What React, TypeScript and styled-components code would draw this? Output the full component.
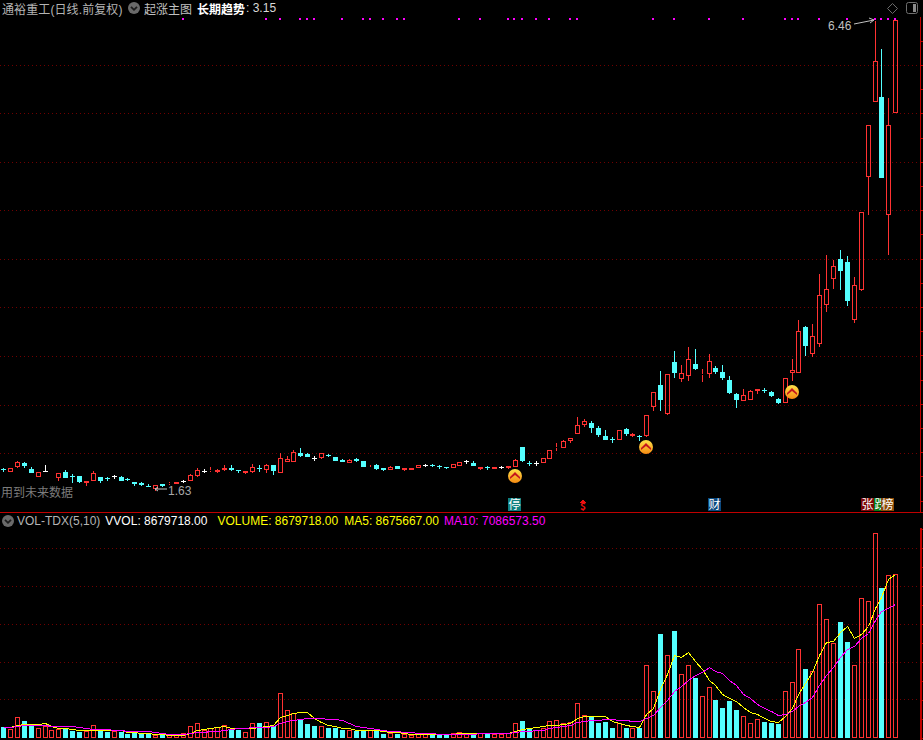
import React from 'react';
import styled, { createGlobalStyle } from 'styled-components';

const GlobalStyle = createGlobalStyle`
  html, body {
    margin: 0;
    padding: 0;
    background: #000;
  }
`;

const RED = '#ff3232';
const CYAN = '#54ffff';
const GRID = '#700000';
const AXIS = '#c00000';

const Page = styled.div`
  width: 923px;
  height: 740px;
  background: #000;
  overflow: hidden;
  display: flex;
  flex-direction: column;
  font-family: "Liberation Sans", "Noto Sans CJK SC", sans-serif;
`;

const MainHeader = styled.div`
  height: 17px;
  display: flex;
  align-items: center;
  padding: 0 5px 1px 2px;
  box-sizing: border-box;
  font-size: 12px;
  white-space: nowrap;
`;

const StockName = styled.span`
  color: #b4b4b4;
  width: 120px;
  margin-right: 6px;
  letter-spacing: 0.1px;
`;

const PlainLabel = styled.span`
  color: #c0c0c0;
  margin: 0 5px 0 4px;
`;

const TrendName = styled.span`
  color: #fff;
  font-weight: 700;
`;

const TrendValue = styled.span`
  color: #d8d8d8;
  margin-left: 1px;
`;

const HeaderTools = styled.div`
  margin-left: auto;
  display: flex;
  align-items: center;
  gap: 8px;
`;

const Chart = styled.svg`
  display: block;
  flex: none;
`;

const LowerHeader = styled.div`
  height: 15px;
  border-top: 1px solid ${AXIS};
  display: flex;
  align-items: center;
  padding: 0 0 0 2px;
  font-size: 12px;
  white-space: nowrap;
`;

const Legend = styled.span<{ $color: string; $gap?: number }>`
  color: ${p => p.$color};
  margin-left: ${p => p.$gap ?? 0}px;
`;

const ChartText = styled.text<{ $color: string; $size?: number }>`
  fill: ${p => p.$color};
  font-size: ${p => p.$size ?? 12}px;
  font-family: "Liberation Sans", "Noto Sans CJK SC", sans-serif;
`;

const BadgeText = styled.text<{ $size?: number; $color?: string }>`
  fill: ${p => p.$color ?? '#fff'};
  font-size: ${p => p.$size ?? 12}px;
  font-family: "Noto Sans CJK SC", sans-serif;
`;

type Row = [string, number, number, number?, number?];
type Candle = { kind: string; top: number; bot: number; wickTop: number; wickBot: number };

// rows are read at 3x, base is the y where that reading starts
const seg = (base: number, rows: Row[]): Candle[] =>
  rows.map(([kind, t, b, wt, wb]) => ({
    kind,
    top: Math.round(base + t / 3),
    bot: Math.round(base + b / 3),
    wickTop: Math.round(base + (wt ?? t) / 3),
    wickBot: Math.round(base + (wb ?? b) / 3),
  }));

const candles: Candle[] = [
  ...seg(440, [
    ['c', 88, 91, 83, 97], ['r', 85, 97], ['r', 67, 82, 64, 85], ['c', 69, 78, 66, 84], ['c', 87, 98, 82, 98],
    ['r', 95, 112], ['w', 93, 95, 75, 95], ['r', 98, 100], ['r', 100, 115, 100, 122], ['c', 95, 113, 91, 113],
    ['c', 108, 110, 103, 128], ['c', 108, 125, 108, 130], ['r', 122, 129, 122, 137], ['r', 100, 122, 94, 124], ['c', 112, 122, 112, 129],
    ['c', 115, 117, 110, 124], ['w', 108, 110, 104, 116], ['c', 111, 122, 108, 122], ['c', 117, 121, 114, 122], ['c', 127, 131, 127, 137],
    ['c', 130, 134, 126, 138], ['c', 137, 139, 133, 140], ['r', 134, 146, 134, 153], ['c', 133, 137, 133, 141], ['r', 129, 133, 126, 135],
    ['r', 127, 131], ['w', 123, 125, 119, 129], ['r', 106, 122, 103, 124], ['r', 91, 109, 83, 110], ['w', 92, 94, 86, 99],
    ['r', 90, 94, 82, 96], ['r', 91, 97, 87, 99], ['r', 84, 91, 75, 93], ['c', 83, 89, 75, 93], ['c', 90, 92, 90, 100],
    ['r', 94, 98, 94, 102], ['r', 82, 95, 72, 100], ['c', 83, 85, 75, 97], ['r', 76, 90, 72, 98], ['c', 76, 93, 76, 104],
    ['r', 55, 98, 40, 98], ['r', 58, 67, 48, 67], ['r', 37, 67, 31, 67], ['c', 38, 47, 24, 50], ['c', 42, 50, 39, 52],
  ]),
  ...seg(400, [
    ['w', 174, 176, 169, 182], ['r', 160, 175, 160, 178], ['c', 165, 167, 161, 171], ['c', 171, 183], ['c', 180, 186, 177, 186],
    ['r', 181, 188, 178, 189], ['c', 178, 182, 174, 186], ['c', 183, 201], ['r', 193, 196, 193, 201], ['c', 195, 207, 191, 209],
    ['c', 205, 210, 205, 213], ['r', 202, 209, 199, 209], ['c', 198, 207], ['r', 205, 209, 205, 213], ['r', 205, 209],
    ['r', 196, 203], ['w', 195, 197, 192, 201], ['c', 195, 197, 191, 202], ['c', 199, 201, 195, 206], ['c', 202, 204, 202, 207],
    ['r', 193, 203], ['r', 187, 197], ['w', 184, 186, 180, 192], ['c', 188, 197, 183, 197], ['r', 202, 206, 202, 210],
    ['c', 202, 204, 197, 210], ['r', 202, 206], ['w', 201, 203, 198, 207], ['r', 199, 204, 199, 207], ['r', 181, 200, 178, 200],
    ['c', 141, 183, 141, 186], ['c', 189, 191, 183, 197], ['w', 189, 191, 183, 197], ['r', 175, 188], ['r', 151, 176],
    ['r', 140, 143, 129, 152], ['r', 124, 143, 121, 143], ['r', 115, 122, 115, 128], ['r', 76, 101, 52, 101], ['r', 64, 76, 58, 80],
    ['c', 69, 83, 64, 99], ['c', 84, 105, 79, 110], ['c', 108, 120, 91, 120], ['c', 118, 120, 111, 129], ['r', 91, 119],
  ]),
  ...seg(340, [
    ['c', 267, 282, 264, 288], ['r', 283, 287, 280, 290], ['c', 287, 289, 285, 302], ['r', 226, 287, 226, 290], ['r', 157, 200, 157, 213],
    ['c', 135, 180, 93, 213], ['r', 103, 221, 103, 225], ['c', 66, 99, 33, 114], ['r', 100, 116, 75, 126], ['r', 58, 107, 21, 123],
    ['c', 72, 87, 27, 90], ['r', 103, 106, 87, 126], ['r', 64, 101, 42, 114], ['c', 84, 96, 78, 102], ['c', 96, 114, 75, 120],
    ['c', 120, 159, 108, 162], ['c', 162, 180, 159, 204], ['r', 166, 183, 147, 183], ['r', 153, 180, 150, 180], ['r', 147, 153, 147, 162],
    ['c', 150, 152, 144, 159], ['c', 156, 168, 153, 171], ['c', 177, 189, 174, 192], ['r', 114, 188], ['r', 91, 98, 57, 123],
  ]),
  ...seg(0, [
    ['r', 994, 1120, 960, 1120], ['c', 981, 1038, 978, 1068], ['r', 1008, 1062, 972, 1071], ['r', 886, 1032, 822, 1041], ['r', 868, 914, 765, 936],
    ['r', 799, 836, 779, 867], ['c', 777, 813, 750, 870], ['c', 786, 903, 768, 918], ['r', 856, 959, 831, 969], ['r', 637, 869, 637, 873],
    ['r', 376, 530, 376, 645], ['r', 184, 305, 63, 305], ['c', 291, 534, 147, 534], ['r', 376, 644, 294, 765], ['r', 61, 338],
  ]),
];

// bar heights at 3x, r = red hollow, c = cyan
const volumes = `c33 r28 r64 c50 c36 r31 r37 r25 r28 c28 c21 c17 r21 r40 c27 c17 r21 c18 c11 c17 c12 c12 r9 c9 r9 r9 r15 r37 r46 r25 r31 r33 r40 c28 c23 r19 r46 c44 r49 c35 r136 r85 r76 c57 c41 c35
r37 c30 c30 c23 r23 c21 c25 r23 c21 c12 r16 c12 r12 r10 r12 r12 c15 c12 c12 r14 r18 r12 c15 r15 c14 r12 r12 r16 r46 c50 c31 r25 r31 r52 r55 r46 r48 r106 r70 c66 c44 c47 c29 r44
c29 r31 c30 r220 r142 c311 r250 c320 r193 r220 c179 r127 r154 c113 c89 c110 c83 r67 r46 r58 c47 c44 c41 r142 r169 r268 c206 r202 r403 r358 r286 c347 c287 r220 r421 r412 r616 c449 r490 r493`
  .trim()
  .split(/\s+/)
  .map(v => ({ kind: v[0], h: Number(v.slice(1)) }));

// columns are 7px apart, one is 6px now and then
const shortSteps = [7, 18, 30, 42, 54, 66, 79, 91, 103, 115, 127];
const barLeft = (i: number) => 1 + 7 * i - shortSteps.filter(s => s <= i).length;

const dots = [
  183, 266, 280, 300, 307, 314, 342, 363, 370, 383, 397, 404, 459, 480, 508, 514, 522, 536, 549, 570, 577, 653, 674, 709,
  743, 785, 792, 798, 819, 847, 875, 881, 888, 895,
];

const mainGrid = [65, 113, 162, 210, 259, 307, 356, 405, 453];
const lowerGrid = [548, 586, 624, 662, 699];

const average = (count: number) =>
  volumes.map((_, i) => {
    const from = Math.max(0, i - count + 1);
    const part = volumes.slice(from, i + 1).map(v => v.h);
    // the chart starts mid-history, fill the missing days
    while (part.length < count) part.push(34);
    return part.reduce((a, b) => a + b, 0) / count;
  });

const linePoints = (values: number[]) =>
  values.map((h, i) => `${barLeft(i) + 2.5},${Math.round(738 - h / 3) + 0.5}`).join(' ');

const CandleMark = ({ c, i }: { c: Candle; i: number }) => {
  const left = barLeft(i);
  const mid = left + 2.5;
  if (c.kind === 'r') {
    return (
      <g stroke={RED} fill="none">
        <line x1={mid} x2={mid} y1={c.wickTop} y2={c.top} />
        <line x1={mid} x2={mid} y1={c.bot} y2={c.wickBot} />
        <rect x={left + 0.5} y={c.top + 0.5} width={4} height={Math.max(c.bot - c.top - 1, 0)} />
      </g>
    );
  }
  const color = c.kind === 'w' ? '#fff' : CYAN;
  return (
    <g>
      <line x1={mid} x2={mid} y1={c.wickTop} y2={c.wickBot} stroke={color} />
      <rect x={left} y={c.top} width={5} height={Math.max(c.bot - c.top, 1)} fill={color} />
    </g>
  );
};

const VolumeBar = ({ kind, h, i }: { kind: string; h: number; i: number }) => {
  const left = barLeft(i);
  const top = Math.round(738 - h / 3);
  if (kind === 'r') {
    return <rect x={left + 0.5} y={top + 0.5} width={4} height={737 - top} fill="none" stroke={RED} />;
  }
  return <rect x={left} y={top} width={5} height={738 - top} fill={CYAN} />;
};

const ChevronBadge = ({ size = 12 }: { size?: number }) => (
  <svg width={size} height={size} viewBox="0 0 12 12">
    <circle cx="6" cy="6" r="6" fill="#6a6a6a" />
    <path d="M3 4.8 L6 7.8 L9 4.8" fill="none" stroke="#1c1c1c" strokeWidth="1.8" />
  </svg>
);

const Diamond = () => (
  <svg width="11" height="11" viewBox="0 0 11 11">
    <path d="M5.5 .5 L10.5 5.5 L5.5 10.5 L.5 5.5 Z" fill="none" stroke="#6a6a6a" />
  </svg>
);

const PanelIcon = () => (
  <svg width="12" height="12" viewBox="0 0 12 12">
    <rect x=".5" y=".5" width="11" height="11" rx="2" fill="none" stroke="#6f6f6f" />
    <rect x="7" y="2" width="3" height="8" fill="#8a8a8a" />
  </svg>
);

// round buy marker with a red chevron
const BuyMarker = ({ x, y }: { x: number; y: number }) => (
  <g>
    <circle cx={x} cy={y} r={7} fill="url(#buyFill)" />
    <path d={`M${x - 5} ${y + 1} L${x} ${y - 4} L${x + 5} ${y + 1} L${x + 5} ${y + 3} L${x} ${y - 1} L${x - 5} ${y + 3} Z`} fill="#c4161c" />
  </g>
);

const GridLine = ({ y }: { y: number }) => <rect x={0} y={y} width={920} height={1} fill="url(#gridDots)" />;

const GridPattern = () => (
  <pattern id="gridDots" width={4} height={1} patternUnits="userSpaceOnUse">
    <rect width={1} height={1} fill={GRID} />
  </pattern>
);

const AxisTicks = ({ grid, from, to, step }: { grid: number[]; from: number; to: number; step: number }) => {
  const ticks: number[] = [];
  for (let y = grid[0]; y > from; y -= step) ticks.push(y);
  for (let y = grid[0] + step; y < to; y += step) ticks.push(y);
  return (
    <g stroke={AXIS}>
      {ticks.map(y => (
        <line key={y} x1={920} x2={923} y1={Math.round(y) + 0.5} y2={Math.round(y) + 0.5} />
      ))}
    </g>
  );
};

export default function App() {
  return (
    <Page>
      <GlobalStyle />
      <MainHeader>
        <StockName>通裕重工(日线.前复权)</StockName>
        <ChevronBadge />
        <PlainLabel>起涨主图</PlainLabel>
        <TrendName>长期趋势</TrendName>
        <TrendValue>: 3.15</TrendValue>
        <HeaderTools>
          <Diamond />
          <PanelIcon />
        </HeaderTools>
      </MainHeader>

      <Chart width={923} height={495} viewBox="0 17 923 495" shapeRendering="crispEdges">
        <defs>
          <GridPattern />
          <linearGradient id="buyFill" x1="0" y1="0" x2="0" y2="1">
            <stop offset="0" stopColor="#ffe24a" />
            <stop offset="1" stopColor="#f58a12" />
          </linearGradient>
        </defs>
        {mainGrid.map(y => (
          <GridLine key={y} y={y} />
        ))}
        {dots.map(x => (
          <rect key={x} x={x - 1} y={18} width={2} height={2} fill="#ff00ff" />
        ))}
        {candles.map((c, i) => (
          <CandleMark key={i} c={c} i={i} />
        ))}
        <line x1={920.5} x2={920.5} y1={17} y2={512} stroke={AXIS} />
        <AxisTicks grid={mainGrid} from={17} to={512} step={24.2} />

        <g shapeRendering="auto">
          <BuyMarker x={515} y={476} />
          <BuyMarker x={646} y={447} />
          <BuyMarker x={792} y={392} />

          <ChartText $color="#c0c0c0" x={828} y={30}>6.46</ChartText>
          <path d="M854 24 L874 20 M869 18 L874 20 L870 23" fill="none" stroke="#c0c0c0" />
          <ChartText $color="#a8a8a8" x={168} y={495}>1.63</ChartText>
          <path d="M167 489 L155 489 M158 487 L155 489 L158 491" fill="none" stroke="#c0c0c0" />
          <ChartText $color="#7c7c7c" x={1} y={497}>用到未来数据</ChartText>
        </g>

        <rect x={508} y={498} width={13} height={13} fill="#0f7f7f" />
        <BadgeText x={508.5} y={509}>停</BadgeText>
        <path d="M583 499 L586 503 L580 503 Z" fill="#f01010" />
        <BadgeText $color="#f01010" x={580} y={510} $size={10} fontWeight={700}>$</BadgeText>
        <rect x={708} y={498} width={13} height={13} fill="#0b4a80" />
        <BadgeText x={708.5} y={509}>财</BadgeText>
        <rect x={861} y={498} width={13} height={13} fill="#7d0808" />
        <BadgeText x={861.5} y={509}>张</BadgeText>
        <rect x={874} y={498} width={13} height={13} fill="#0a7a10" />
        <BadgeText x={874.5} y={509}>跌</BadgeText>
        <rect x={881} y={498} width={13} height={13} fill="#8a4b08" />
        <BadgeText x={881.5} y={509}>榜</BadgeText>
      </Chart>

      <LowerHeader>
        <ChevronBadge />
        <Legend $color="#b4b4b4" $gap={3}>VOL-TDX(5,10)</Legend>
        <Legend $color="#fff" $gap={5}>VVOL: 8679718.00</Legend>
        <Legend $color="#ffff00" $gap={10}>VOLUME: 8679718.00</Legend>
        <Legend $color="#ffff00" $gap={6}>MA5: 8675667.00</Legend>
        <Legend $color="#ff00ff" $gap={5}>MA10: 7086573.50</Legend>
      </LowerHeader>

      <Chart width={923} height={212} viewBox="0 528 923 212" shapeRendering="crispEdges">
        <defs>
          <GridPattern />
        </defs>
        {lowerGrid.map(y => (
          <GridLine key={y} y={y} />
        ))}
        {volumes.map((v, i) => (
          <VolumeBar key={i} kind={v.kind} h={v.h} i={i} />
        ))}
        <polyline points={linePoints(average(5))} fill="none" stroke="#ffff00" />
        <polyline points={linePoints(average(10))} fill="none" stroke="#ff00ff" />
        <rect x={920} y={528} width={2} height={212} fill={AXIS} />
        <AxisTicks grid={lowerGrid} from={528} to={740} step={19} />
      </Chart>
    </Page>
  );
}
